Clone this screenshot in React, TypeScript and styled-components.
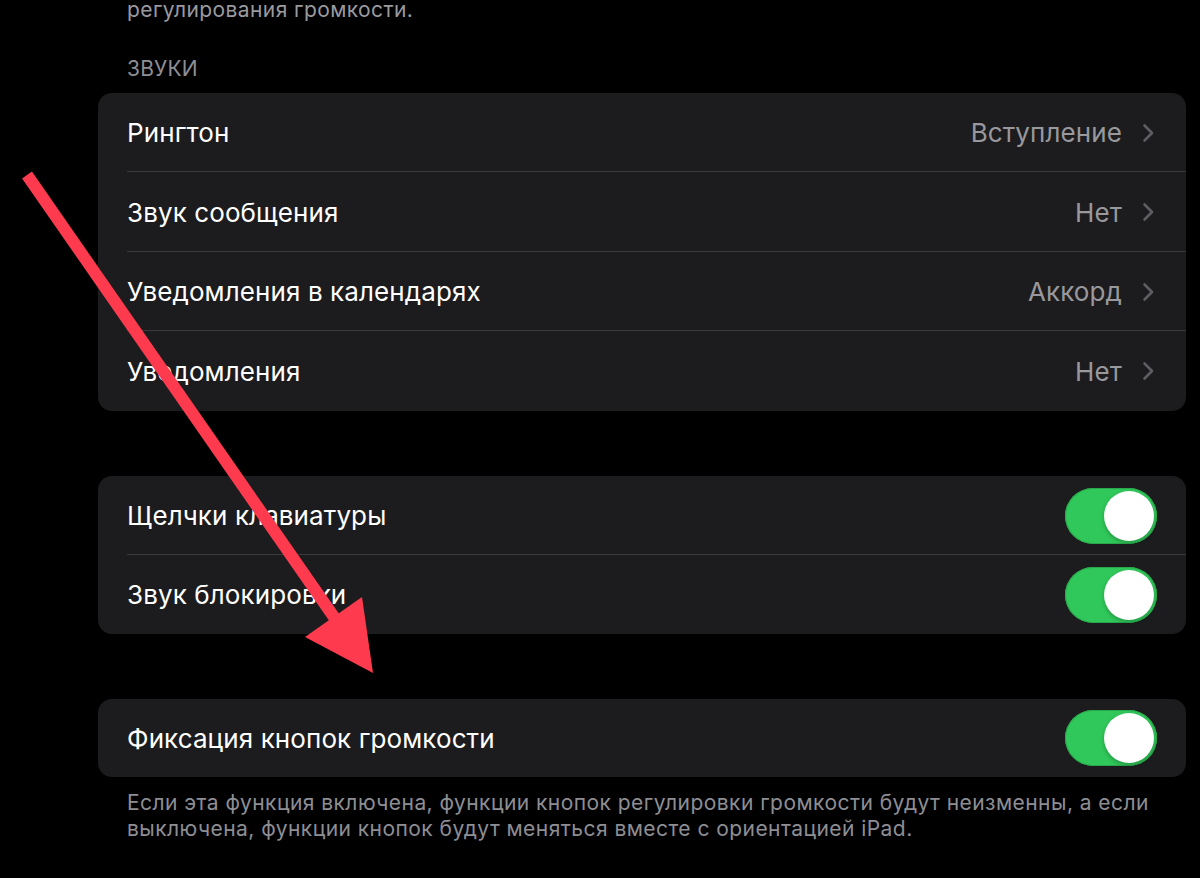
import React from "react";
import styled, { createGlobalStyle } from "styled-components";

const Global = createGlobalStyle`
  html, body { margin: 0; padding: 0; background: #000; }
  body { font-family: Inter, "Noto Sans", "Liberation Sans", sans-serif; -webkit-font-smoothing: antialiased; }
  * { box-sizing: border-box; }
`;

const Page = styled.div`
  position: relative;
  width: 1200px;
  height: 878px;
  overflow: hidden;
  background: #000;
  padding: 0 14px 0 98px;
  display: flex;
  flex-direction: column;
`;

const TopNote = styled.div`
  height: 22px;
  padding-left: 29px;
  font-size: 21px;
  line-height: 19px;
  color: #9a9a9f;
  letter-spacing: 0.4px;
`;

const SectionHeader = styled.div`
  margin-top: 36px;
  height: 35px;
  padding-left: 29px;
  font-size: 21px;
  line-height: 22px;
  color: #8e8e93;
  letter-spacing: 0.2px;
`;

const Group = styled.div<{ $mt?: number }>`
  margin-top: ${(p) => p.$mt ?? 0}px;
  background: #1c1c1e;
  border-radius: 14px;
  overflow: hidden;
  display: flex;
  flex-direction: column;
`;

const Row = styled.div<{ $h: number; $last?: boolean }>`
  position: relative;
  height: ${(p) => p.$h}px;
  display: flex;
  align-items: center;
  padding: 0 29px;
  gap: 14px;
  &::after {
    content: "";
    display: ${(p) => (p.$last ? "none" : "block")};
    position: absolute;
    left: 29px;
    right: 0;
    bottom: 0;
    height: 1px;
    background: #3a3a3c;
  }
`;

const Label = styled.span`
  flex: 1;
  font-size: 26px;
  color: #fff;
  letter-spacing: 0.1px;
`;

const Value = styled.span`
  font-size: 26px;
  color: #98989d;
  letter-spacing: 0.1px;
`;

const Chevron = styled.svg`
  width: 13px;
  height: 20px;
  margin-left: 6px;
  margin-right: 2px;
`;

const Toggle = styled.div`
  width: 92px;
  height: 56px;
  border-radius: 28px;
  background: #30c85a;
  padding: 3px;
  display: flex;
  justify-content: flex-end;
  box-shadow: inset 0 0 0 1px #28a84a;
`;

const Knob = styled.div`
  width: 50px;
  height: 50px;
  border-radius: 50%;
  background: #fff;
  box-shadow: 0 2px 4px rgba(0, 0, 0, 0.25);
`;

const Footer = styled.div`
  margin-top: 13px;
  padding-left: 29px;
  font-size: 21px;
  line-height: 26px;
  color: #8e8e93;
  letter-spacing: 0.45px;
  white-space: nowrap;
`;

const ArrowLayer = styled.svg`
  position: absolute;
  left: 0;
  top: 0;
  width: 1200px;
  height: 878px;
  pointer-events: none;
`;

const ChevronIcon = () => (
  <Chevron viewBox="0 0 13 20">
    <path d="M2.5 2.5 L10 10 L2.5 17.5" fill="none" stroke="#5d5d62" strokeWidth="2.6" strokeLinecap="round" strokeLinejoin="round" />
  </Chevron>
);

const Switch = () => (
  <Toggle>
    <Knob />
  </Toggle>
);

const sounds = [
  { label: "Рингтон", value: "Вступление" },
  { label: "Звук сообщения", value: "Нет" },
  { label: "Уведомления в календарях", value: "Аккорд" },
  { label: "Уведомления", value: "Нет" },
];

export default function App() {
  return (
    <>
      <Global />
      <Page>
        <TopNote>регулирования громкости.</TopNote>
        <SectionHeader>ЗВУКИ</SectionHeader>
        <Group>
          {sounds.map((s, i) => (
            <Row key={s.label} $h={i % 2 === 0 ? 79 : 80} $last={i === sounds.length - 1}>
              <Label>{s.label}</Label>
              <Value>{s.value}</Value>
              <ChevronIcon />
            </Row>
          ))}
        </Group>
        <Group $mt={65}>
          <Row $h={79}>
            <Label>Щелчки клавиатуры</Label>
            <Switch />
          </Row>
          <Row $h={79} $last>
            <Label>Звук блокировки</Label>
            <Switch />
          </Row>
        </Group>
        <Group $mt={65}>
          <Row $h={78} $last>
            <Label>Фиксация кнопок громкости</Label>
            <Switch />
          </Row>
        </Group>
        <Footer>
          Если эта функция включена, функции кнопок регулировки громкости будут неизменны, а если
          <br />
          выключена, функции кнопок будут меняться вместе с ориентацией iPad.
        </Footer>
        <ArrowLayer viewBox="0 0 1200 878">
          <line x1="27" y1="175" x2="336" y2="620" stroke="#fe3a4e" strokeWidth="12" />
          <polygon points="362,597 305,637 373,673" fill="#fe3a4e" />
        </ArrowLayer>
      </Page>
    </>
  );
}
